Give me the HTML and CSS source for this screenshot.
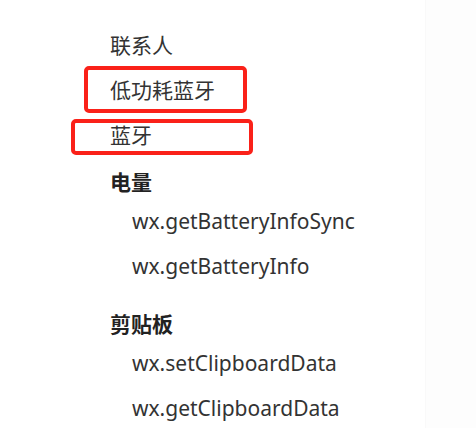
FILE: index.html
```html
<!DOCTYPE html>
<html lang="zh-CN">
<head>
<meta charset="utf-8">
<title>API 目录</title>
<link rel="stylesheet" href="styles.css">
</head>
<body>
<div class="page">
  <nav class="menu">
    <ul class="top">
      <li class="item">联系人</li>
      <li class="item">低功耗蓝牙<span class="mark mark-ble"></span></li>
      <li class="item">蓝牙<span class="mark mark-bt"></span></li>
    </ul>
    <section class="group first">
      <h3 class="heading">电量</h3>
      <ul class="sub">
        <li class="item">wx.getBatteryInfoSync</li>
        <li class="item">wx.getBatteryInfo</li>
      </ul>
    </section>
    <section class="group">
      <h3 class="heading">剪贴板</h3>
      <ul class="sub">
        <li class="item">wx.setClipboardData</li>
        <li class="item">wx.getClipboardData</li>
      </ul>
    </section>
  </nav>
  <div class="edge"></div>
</div>
</body>
</html>
```
FILE: styles.css
```css
html, body {
  margin: 0;
  padding: 0;
  background: #ffffff;
}
body {
  font-family: "Noto Sans", "Noto Sans CJK SC", sans-serif;
  color: #333333;
  width: 476px;
  height: 428px;
  overflow: hidden;
}
.page {
  display: flex;
  height: 428px;
}
.menu {
  flex: 1;
  padding-top: 23px;
  padding-left: 110px;
}
.edge {
  width: 50px;
  border-left: 1px solid #f9f9f9;
  background: #fdfdfd;
}
ul {
  list-style: none;
  margin: 0;
  padding: 0;
}
.item {
  position: relative;
  font-size: 21px;
  line-height: 45px;
  height: 45px;
  white-space: nowrap;
}
.group {
  margin-top: 18px;
}
.group.first {
  margin-top: 7px;
}
.heading {
  margin: 0;
  font-size: 21px;
  font-weight: 700;
  line-height: 34px;
  color: #222222;
}
.sub {
  padding-left: 22px;
}
.mark {
  position: absolute;
  box-sizing: border-box;
  border: 4px solid #fa2119;
  border-radius: 5px;
}
.mark-ble {
  left: -26px;
  top: -2px;
  width: 163px;
  height: 47px;
}
.mark-bt {
  left: -39px;
  top: 6px;
  width: 182px;
  height: 36px;
}
```
